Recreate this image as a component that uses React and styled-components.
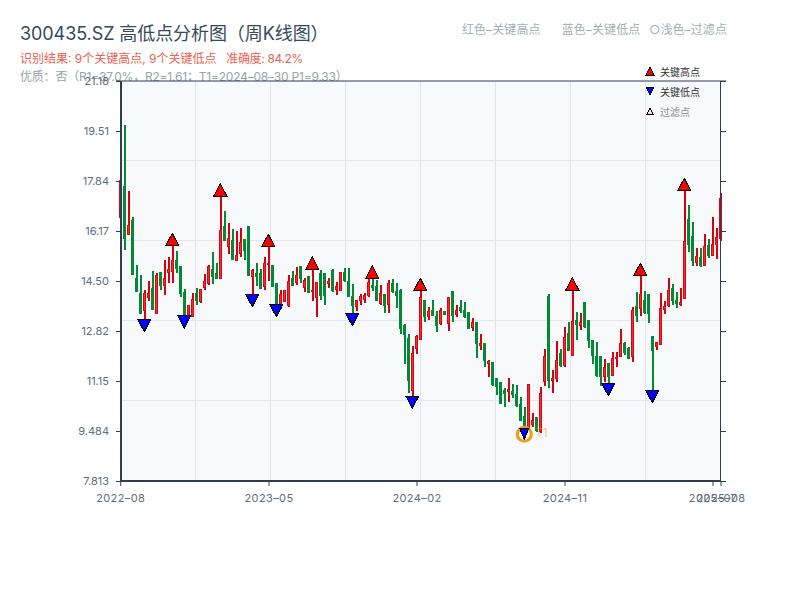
// Packages
import React from "react"
import styled, { createGlobalStyle } from "styled-components"

// Weekly candles traced from the chart: [colour, high, low, bodyTop, bodyBottom]
// Values are in 3x units, y = base + value / 3
const toPixels = (base, rows) =>
    rows.map(([c, h, l, t, b]) => [c, base + h / 3, base + l / 3, base + t / 3, base + b / 3])

const Candles = [
    ...toPixels(120, [
        ["r", 182, 293, 182, 293], ["g", 15, 390, 200, 355], ["r", 213, 342, 315, 342], ["g", 292, 462, 300, 462],
        ["g", 435, 515, 475, 515], ["g", 465, 582, 520, 580], ["r", 510, 600, 520, 572], ["r", 483, 543, 519, 531],
        ["g", 453, 567, 505, 567], ["r", 460, 582, 465, 580], ["g", 457, 510, 457, 497], ["r", 420, 525, 475, 495],
        ["r", 411, 490, 447, 458], ["r", 378, 490, 420, 455], ["g", 393, 458, 420, 445], ["g", 440, 530, 440, 520],
        ["g", 508, 590, 518, 590], ["r", 555, 598, 555, 590], ["r", 520, 590, 538, 590], ["g", 505, 555, 520, 542],
        ["r", 508, 548, 508, 545], ["r", 462, 510, 484, 503], ["r", 435, 495, 440, 490], ["g", 397, 492, 447, 470],
        ["g", 430, 475, 460, 475], ["r", 228, 477, 330, 475], ["g", 273, 362, 320, 362], ["r", 310, 402, 355, 380],
        ["g", 327, 417, 360, 417], ["r", 332, 422, 405, 420], ["r", 325, 412, 367, 400], ["g", 357, 420, 357, 392],
        ["g", 318, 468, 318, 467], ["r", 447, 525, 452, 468], ["g", 430, 498, 460, 470], ["g", 447, 505, 460, 505],
        ["r", 410, 510, 430, 500], ["r", 380, 482, 430, 433], ["g", 437, 502, 437, 500], ["g", 490, 555, 490, 555],
        ["r", 510, 568, 522, 553], ["r", 510, 545, 510, 545], ["r", 465, 562, 483, 555], ["g", 452, 498, 475, 495],
        ["r", 440, 495, 465, 488], ["g", 438, 490, 438, 475], ["r", 473, 515, 480, 503], ["g", 470, 520, 470, 517],
    ]),
    ...toPixels(240, [
        ["r", 88, 183, 150, 155], ["r", 125, 230, 127, 173], ["g", 90, 180, 100, 165], ["g", 100, 195, 100, 165],
        ["r", 113, 145, 125, 130], ["g", 87, 155, 90, 150], ["r", 125, 165, 140, 147], ["r", 97, 150, 97, 150],
        ["g", 85, 125, 97, 122], ["g", 83, 170, 123, 168], ["g", 133, 220, 168, 195], ["r", 180, 213, 182, 198],
        ["r", 162, 195, 168, 180], ["r", 158, 190, 165, 177], ["r", 118, 170, 127, 165], ["g", 115, 153, 137, 143],
        ["g", 120, 183, 140, 180], ["r", 135, 195, 160, 190], ["g", 162, 218, 162, 195], ["r", 120, 218, 130, 192],
        ["g", 117, 160, 130, 155], ["g", 130, 203, 153, 165], ["g", 147, 282, 150, 265], ["g", 252, 372, 255, 283],
        ["g", 282, 460, 295, 420], ["r", 318, 470, 340, 450], ["r", 285, 342, 290, 325], ["r", 152, 300, 172, 297],
        ["g", 180, 245, 180, 230], ["r", 202, 240, 215, 228], ["g", 180, 225, 212, 225], ["g", 213, 275, 230, 255],
        ["r", 205, 255, 210, 250], ["g", 213, 225, 215, 223], ["r", 172, 272, 172, 250], ["g", 153, 245, 153, 225],
        ["r", 195, 230, 210, 222], ["g", 180, 220, 202, 212], ["g", 187, 235, 210, 228], ["g", 217, 268, 217, 265],
        ["r", 235, 272, 247, 263], ["g", 247, 353, 247, 310], ["r", 282, 330, 310, 317], ["g", 310, 380, 310, 362],
        ["r", 360, 410, 363, 370], ["g", 367, 437, 367, 432], ["g", 415, 465, 415, 440],
    ]),
    ...toPixels(170, [
        ["g", 637, 700, 637, 700], ["g", 655, 712, 660, 670], ["r", 625, 695, 658, 665], ["g", 643, 683, 665, 672],
        ["g", 645, 710, 673, 707], ["g", 682, 752, 702, 750], ["g", 712, 770, 740, 765], ["r", 642, 775, 642, 775],
        ["r", 730, 770, 752, 762], ["g", 742, 785, 742, 780], ["r", 652, 790, 670, 785], ["r", 537, 647, 558, 635],
        ["g", 372, 653, 380, 630], ["r", 600, 668, 625, 632], ["r", 513, 635, 570, 625], ["g", 537, 590, 550, 587],
        ["r", 472, 590, 502, 587], ["g", 457, 543, 490, 540], ["r", 360, 555, 455, 555], ["g", 427, 510, 450, 462],
        ["r", 430, 480, 458, 465], ["g", 397, 473, 397, 470], ["g", 450, 533, 450, 512], ["g", 510, 582, 510, 555],
        ["g", 516, 620, 558, 617], ["g", 558, 647, 558, 620], ["r", 568, 635, 592, 620], ["g", 580, 640, 580, 620],
        ["r", 547, 617, 565, 615], ["r", 545, 590, 562, 566], ["r", 477, 562, 520, 560], ["g", 515, 555, 520, 548],
        ["g", 532, 567, 535, 565], ["r", 412, 575, 420, 560], ["g", 367, 455, 408, 437], ["r", 317, 437, 372, 415],
        ["g", 362, 432, 390, 428], ["g", 372, 458, 372, 430], ["g", 498, 660, 498, 542], ["r", 515, 540, 517, 530],
        ["r", 370, 525, 415, 522], ["r", 392, 433, 410, 418], ["r", 325, 410, 360, 405], ["g", 343, 405, 355, 390],
        ["g", 365, 413, 390, 400], ["r", 355, 407, 397, 403], ["r", 62, 387, 215, 385], ["g", 105, 245, 148, 222],
        ["g", 157, 287, 200, 272], ["r", 235, 288, 258, 278], ["g", 235, 290, 262, 287], ["r", 192, 285, 228, 285],
        ["g", 207, 263, 227, 255], ["r", 142, 255, 222, 255], ["r", 175, 267, 202, 222], ["r", 70, 212, 85, 205],
    ]),
]

// [x, y of the triangle's flat edge]
const Highs = [[172.3, 245.7], [220.3, 196], [268.3, 246.7], [312.3, 269.3], [372.3, 278.3], [420.3, 290.7], [572.3, 290], [640.3, 275.7], [684.3, 190.7]]
const Lows = [[144.3, 319.3], [184.3, 315.7], [252.3, 294.3], [276.3, 304.3], [352.3, 313.3], [412.3, 396], [608.3, 383.3], [652.3, 390.3]]

const YLabels = ["21.18", "19.51", "17.84", "16.17", "14.50", "12.82", "11.15", "9.484", "7.813"]
const XLabels = [[120.7, "2022–08"], [269, "2023–05"], [417, "2024–02"], [565, "2024–11"], [713, "2025–07"], [721, "2025–08"]]

const PlotLeft = 121
const PlotRight = 721
const PlotTop = 81
const PlotBottom = 481

// Styles
const GlobalStyle = createGlobalStyle`
    html, body {
        margin: 0;
        background: #ffffff;
        font-family: Inter, "Noto Sans CJK SC", sans-serif;
    }
`

const Page = styled.div`
    width: 800px;
    height: 600px;
    overflow: hidden;
`

const Header = styled.header`
    height: 60px;
    padding: 22px 73px 0 20px;
    box-sizing: border-box;
    display: flex;
    justify-content: space-between;
    align-items: flex-start;
`

const Titles = styled.div`
    display: flex;
    flex-direction: column;
`

const Title = styled.h1`
    margin: 0;
    font-size: 18px;
    line-height: 24px;
    font-weight: 400;
    letter-spacing: -0.08px;
    color: #34495e;
`

const Result = styled.p`
    margin: 4px 0 0;
    font-size: 12px;
    line-height: 17px;
    color: #ec5f4f;
    white-space: pre;
`

const ResultScore = styled.span`
    margin-left: 3px;
    letter-spacing: -0.35px;
`

const Quality = styled.p`
    margin: 1px 0 0;
    font-size: 12px;
    line-height: 17px;
    letter-spacing: -0.2px;
    color: #95a5a6;
    white-space: pre;
`

const ColourKey = styled.div`
    display: flex;
    font-size: 12px;
    line-height: 16px;
    letter-spacing: 0.1px;
    color: #a3b0b1;
`

const KeyItem = styled.span`
    margin-left: ${props => props.gap}px;
    white-space: pre;
`

const Chart = styled.svg`
    display: block;
    width: 800px;
    height: 460px;
`

const Plot = styled.rect`
    fill: #f8f9fa;
`

const Grid = styled.line`
    stroke: #e2e6ec;
    stroke-width: 1;
`

const AxisLine = styled.line`
    stroke: #2c3e50;
    stroke-width: ${props => props.$weight || 1};
`

const AxisText = styled.text`
    font-size: 11px;
    fill: #5d6d7e;
    letter-spacing: ${props => props.$spacing || 0}px;
    text-anchor: ${props => props.$anchor};
`

const Wick = styled.line`
    stroke: ${props => (props.$up ? "#d6000f" : "#008a36")};
    stroke-width: 2;
    shape-rendering: crispEdges;
`

const Body = styled.rect`
    fill: ${props => (props.$up ? "#fb2a2a" : "#008a36")};
    stroke: ${props => (props.$up ? "#dc0612" : "#008a36")};
    stroke-width: 1;
    shape-rendering: crispEdges;
`

const Marker = styled.polygon`
    fill: ${props => props.$fill};
    stroke: #000000;
    stroke-width: 1;
    shape-rendering: crispEdges;
`

const Ring = styled.circle`
    fill: none;
    stroke: #f39c12;
    stroke-width: 3;
`

const RingLabel = styled.text`
    font-size: 12px;
    fill: #f39c12;
    opacity: 0.5;
`

const LegendText = styled.text`
    font-size: 10px;
    fill: ${props => (props.$muted ? "#8d8d8d" : "#333333")};
`

function HighMarker({ x, y }) {
    return <Marker $fill="#ff0000" points={`${x - 6.5},${y} ${x + 6.5},${y} ${x},${y - 12.5}`} />
}

function LowMarker({ x, y, width = 13, height = 12.5 }) {
    return <Marker $fill="#0000ff" points={`${x - width / 2},${y} ${x + width / 2},${y} ${x},${y + height}`} />
}

function CandleStick({ index, candle }) {
    const [colour, high, low, top, bottom] = candle
    const x = 120.5 + index * 4
    const up = colour === "r"
    return (
        <g>
            <Wick $up={up} x1={x + 0.5} x2={x + 0.5} y1={high} y2={low} />
            <Body $up={up} x={x - 1} y={top} width={2} height={Math.max(bottom - top, 1)} />
        </g>
    )
}

function PriceChart() {
    return (
        <Chart viewBox="0 60 800 460">
            <Plot x={PlotLeft} y={PlotTop} width={600} height={400} />

            {[195.5, 270.5, 345.5, 420.5, 495.5, 570.5, 645.5].map(x => (
                <Grid key={x} x1={x} x2={x} y1={PlotTop} y2={PlotBottom} />
            ))}
            {[160.5, 240.5, 320.5, 400.5].map(y => (
                <Grid key={y} x1={PlotLeft} x2={PlotRight} y1={y} y2={y} />
            ))}

            {Candles.map((candle, i) => (
                <CandleStick key={i} index={i} candle={candle} />
            ))}

            <AxisLine x1={116} x2={726} y1={81} y2={81} />
            <AxisLine x1={720.5} x2={720.5} y1={81} y2={481} />
            <AxisLine $weight={2} x1={121} x2={121} y1={81} y2={482} />
            <AxisLine $weight={2} x1={120} x2={721} y1={481} y2={481} />

            {YLabels.map((label, i) => {
                const y = PlotTop + i * 50
                return (
                    <g key={label}>
                        <AxisLine x1={116} x2={121} y1={y + 0.5} y2={y + 0.5} />
                        <AxisLine x1={721} x2={726} y1={y + 0.5} y2={y + 0.5} />
                        <AxisText $anchor="end" x={109} y={y + 4}>{label}</AxisText>
                    </g>
                )
            })}

            {XLabels.map(([x, label]) => (
                <g key={label}>
                    <AxisLine x1={x} x2={x} y1={481} y2={486} />
                    <AxisText $anchor="middle" $spacing={0.4} x={x} y={502}>{label}</AxisText>
                </g>
            ))}

            {Highs.map(([x, y]) => (
                <HighMarker key={x} x={x} y={y} />
            ))}
            {Lows.map(([x, y]) => (
                <LowMarker key={x} x={x} y={y} />
            ))}

            <Ring cx={524.3} cy={434.3} r={7} />
            <LowMarker x={524.3} y={428.5} width={9} height={11} />
            <RingLabel x={535} y={437}>T1</RingLabel>

            <Marker $fill="#ff0000" points="646,75 654,75 650,67" />
            <LegendText x={660} y={76}>关键高点</LegendText>
            <Marker $fill="#0000ff" points="646,87 654,87 650,95" />
            <LegendText x={660} y={96}>关键低点</LegendText>
            <Marker $fill="#ffd9d9" points="647,114 653,114 650,108" />
            <LegendText $muted x={660} y={116}>过滤点</LegendText>
        </Chart>
    )
}

function App() {
    return (
        <Page>
            <GlobalStyle />
            <Header>
                <Titles>
                    <Title>300435.SZ 高低点分析图（周K线图）</Title>
                    <Result>
                        识别结果: 9个关键高点, 9个关键低点  <ResultScore>准确度: 84.2%</ResultScore>
                    </Result>
                    <Quality>优质：否（R1=37.0%，R2=1.61；T1=2024–08–30 P1=9.33）</Quality>
                </Titles>
                <ColourKey>
                    <KeyItem>红色–关键高点</KeyItem>
                    <KeyItem gap={21}>蓝色–关键低点</KeyItem>
                    <KeyItem gap={9}>○浅色–过滤点</KeyItem>
                </ColourKey>
            </Header>
            <PriceChart />
        </Page>
    )
}

export default App
